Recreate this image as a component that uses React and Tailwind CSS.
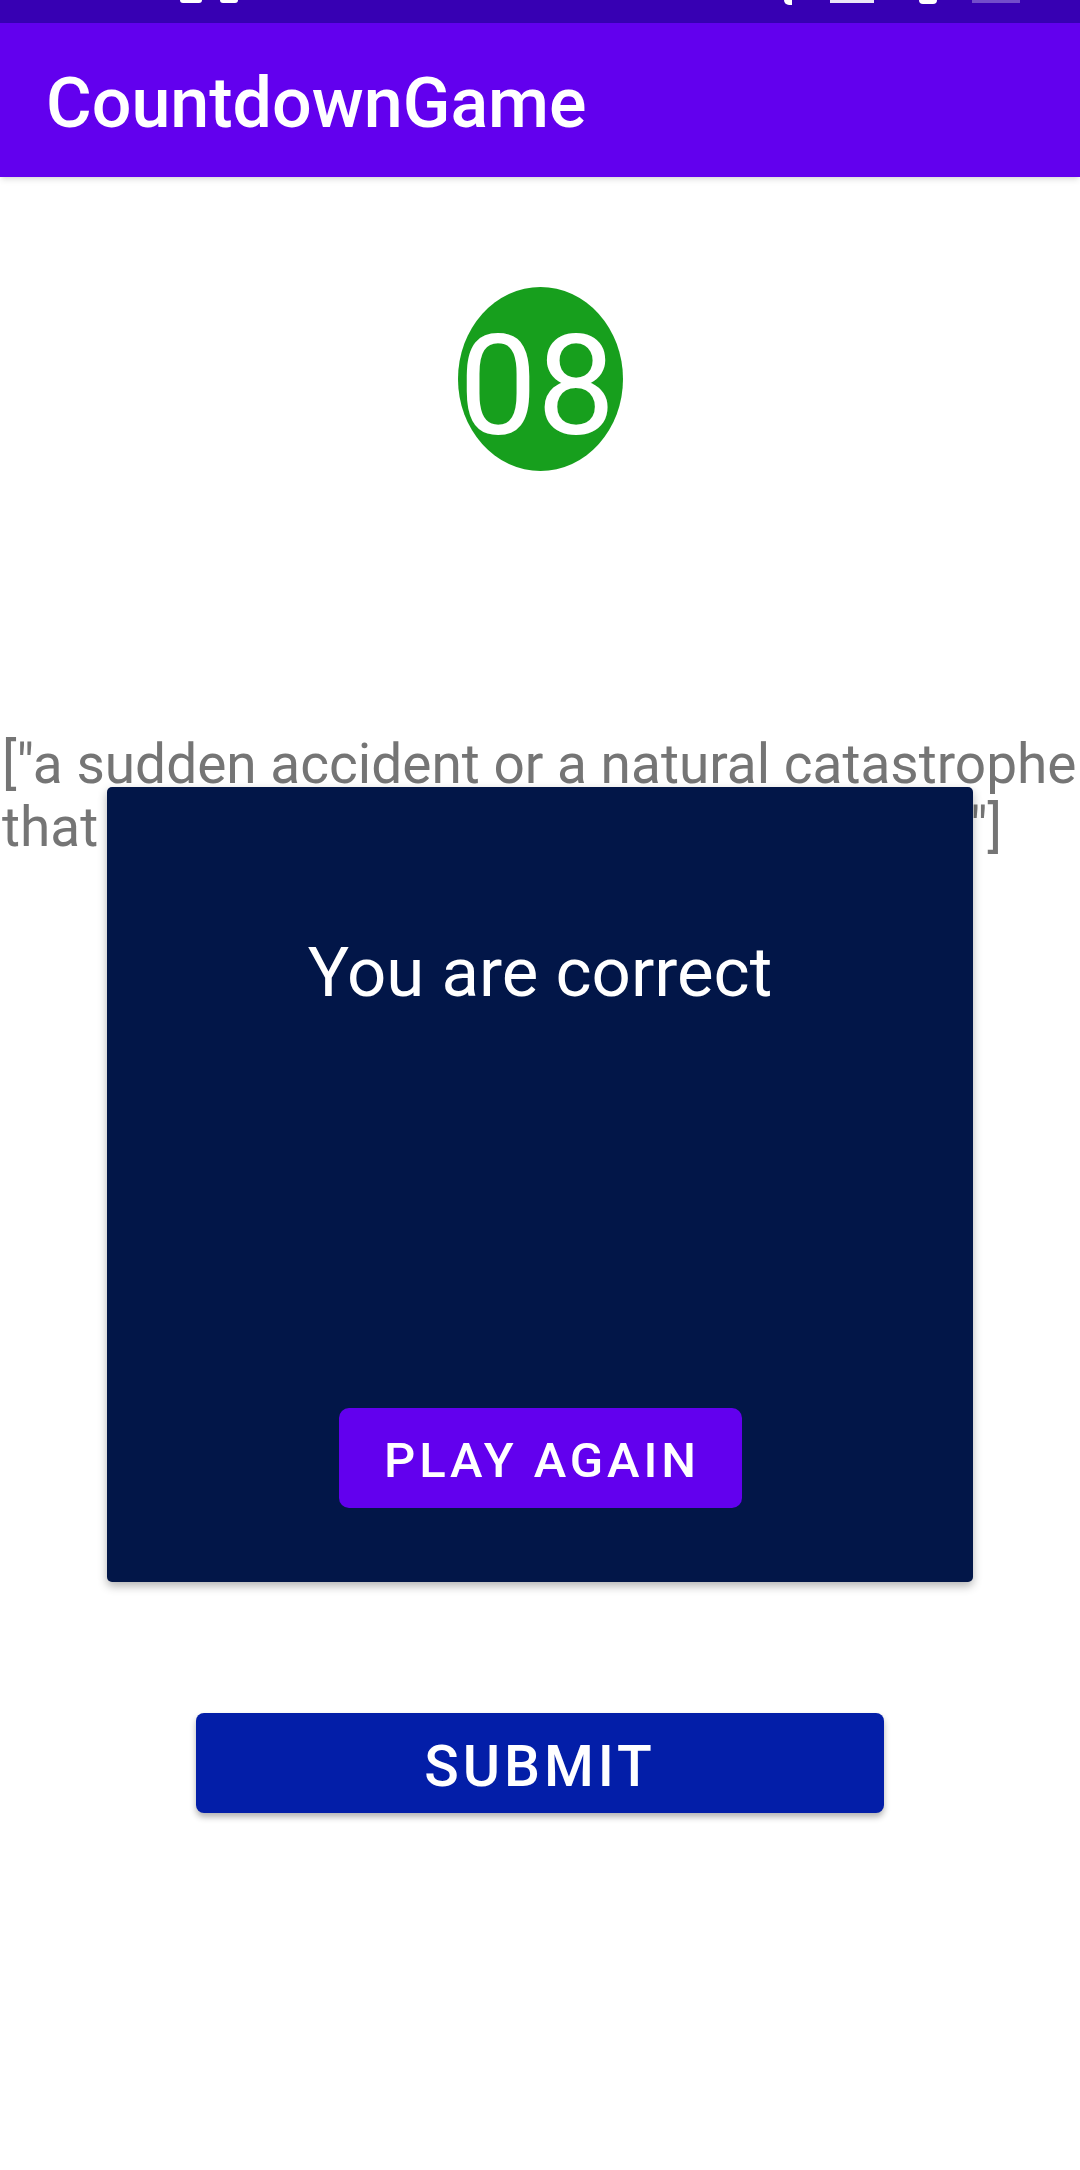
export default function App() {
  return (
    <div className="relative w-[1080px] h-[2170px] bg-white overflow-hidden font-['Roboto',sans-serif]">
      {/* status bar, clipped at top: only the bottoms of the icons show */}
      <div className="h-[23px] bg-[#3700b3] flex items-start">
        <div className="ml-[180px] flex gap-[18px]">
          <span className="w-[22px] h-[3px] rounded-b-full bg-white" />
          <span className="w-[18px] h-[3px] rounded-b-full bg-white" />
        </div>
        <div className="ml-auto mr-[60px] flex items-start gap-[10px]">
          <span className="w-[8px] h-[5px] rounded-bl-full bg-white" />
          <span className="ml-[28px] w-[44px] h-[3px] bg-white/90" />
          <span className="ml-[35px] w-[18px] h-[4px] rounded-b bg-white" />
          <span className="ml-[25px] w-[48px] h-[3px] bg-white/30" />
        </div>
      </div>

      {/* toolbar */}
      <div className="relative z-10 h-[154px] bg-[#6200ee] pl-[46px] pt-[44px] shadow-md">
        <h1 className="text-[70px] leading-[72px] font-medium text-white">CountdownGame</h1>
      </div>

      {/* timer */}
      <div className="mt-[110px] flex justify-center">
        <div className="w-[165px] h-[184px] rounded-[50%] bg-[#179f1d] pt-[30px] text-center">
          <span className="block text-[139px] leading-[139px] text-white -ml-[6px]">08</span>
        </div>
      </div>

      {/* question */}
      <p className="mt-[262px] pl-[2px] text-[55px] leading-[63px] text-[#757575]">
        ["a sudden accident or a natural catastrophe that causes great damage or loss of life"]
      </p>

      {/* submit */}
      <div className="mt-[854px] flex justify-center">
        <button className="w-[688px] h-[100px] rounded-[8px] bg-[#031ea8] pt-[7px] text-[57px] leading-[57px] font-medium tracking-[0.07em] text-white shadow-[0_4px_6px_rgba(0,0,0,0.3)]">
          SUBMIT
        </button>
      </div>

      {/* result popup */}
      <div className="absolute left-[107px] top-[787px] w-[866px] h-[795px] rounded-[5px] bg-[#021648] shadow-[0_4px_10px_rgba(0,0,0,0.3)] flex flex-col items-center">
        <p className="mt-[147px] text-[69px] leading-[78px] text-white">You are correct</p>
        <button className="mt-[396px] w-[403px] h-[100px] rounded-[10px] bg-[#6200ee] pt-[4px] pl-[4px] text-[49px] leading-[49px] font-medium tracking-[0.08em] text-white">
          PLAY AGAIN
        </button>
      </div>
    </div>
  );
}
